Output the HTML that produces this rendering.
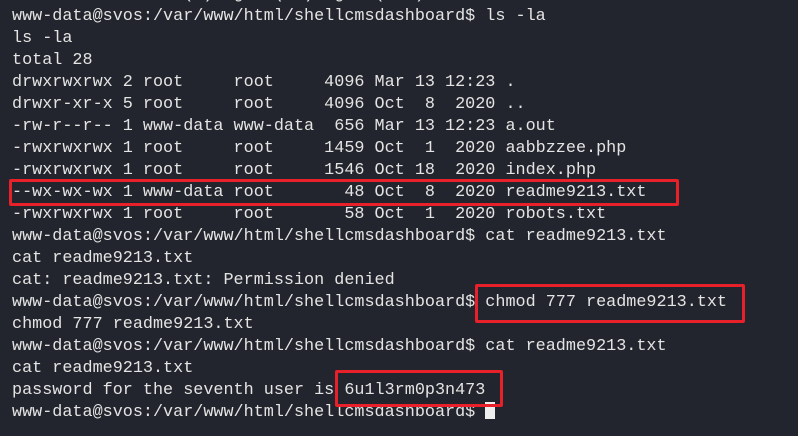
<!DOCTYPE html><html><head><style>
body{margin:0;width:798px;height:436px;background:#22252d;overflow:hidden;position:relative}
pre{position:absolute;left:12px;top:-16px;margin:0;font:16.8px/22px "Liberation Mono",monospace;color:#e4e4e4}
.b{position:absolute;border:3px solid #e8202a;border-radius:2px}
.c{display:inline-block;width:10px;height:17px;background:#eee;vertical-align:-3px}
</style></head><body>
<pre>                 ( )  g   (  )  g   (   )
www-data@svos:/var/www/html/shellcmsdashboard$ ls -la
ls -la
total 28
drwxrwxrwx 2 root     root     4096 Mar 13 12:23 .
drwxr-xr-x 5 root     root     4096 Oct  8  2020 ..
-rw-r--r-- 1 www-data www-data  656 Mar 13 12:23 a.out
-rwxrwxrwx 1 root     root     1459 Oct  1  2020 aabbzzee.php
-rwxrwxrwx 1 root     root     1546 Oct 18  2020 index.php
--wx-wx-wx 1 www-data root       48 Oct  8  2020 readme9213.txt
-rwxrwxrwx 1 root     root       58 Oct  1  2020 robots.txt
www-data@svos:/var/www/html/shellcmsdashboard$ cat readme9213.txt
cat readme9213.txt
cat: readme9213.txt: Permission denied
www-data@svos:/var/www/html/shellcmsdashboard$ chmod 777 readme9213.txt
chmod 777 readme9213.txt
www-data@svos:/var/www/html/shellcmsdashboard$ cat readme9213.txt
cat readme9213.txt
password for the seventh user is 6u1l3rm0p3n473
www-data@svos:/var/www/html/shellcmsdashboard$ <span class="c"></span></pre>
<div class="b" style="left:9px;top:179px;width:664px;height:21px"></div>
<div class="b" style="left:475px;top:284px;width:264px;height:33px"></div>
<div class="b" style="left:335px;top:370px;width:162px;height:31px"></div>
</body></html>
